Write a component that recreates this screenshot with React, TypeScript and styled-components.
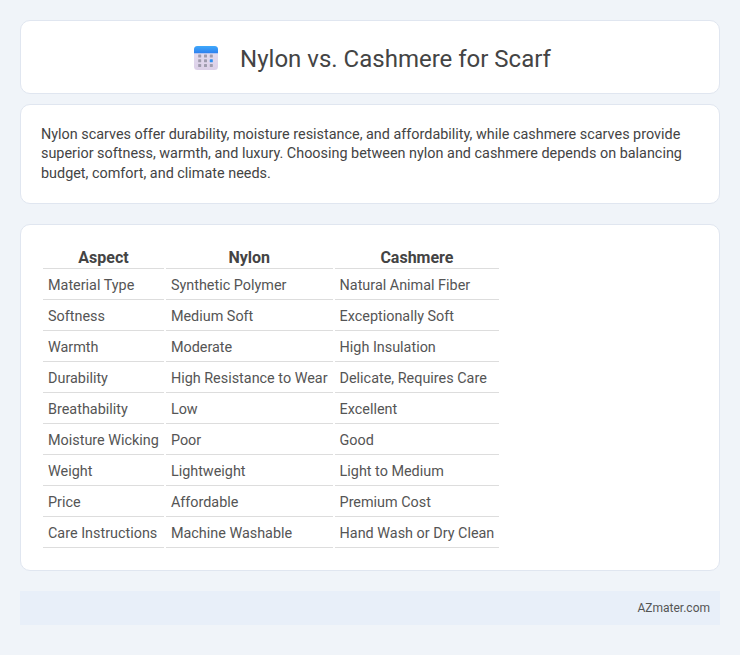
import { createGlobalStyle, styled } from "styled-components";

const GlobalStyle = createGlobalStyle`
  body {
    margin: 0;
    padding: 20px;
    background: #f0f4f9;
    font-family: Roboto, "Liberation Sans", sans-serif;
    font-size: 14.4px;
    line-height: 1.35;
    color: #444;
  }
`;

const Page = styled.div`
  display: flex;
  flex-direction: column;
`;

const Card = styled.section<{ $gap?: number }>`
  background: #fff;
  border: 1px solid #e0e6f0;
  border-radius: 10px;
  margin-bottom: ${(p) => p.$gap ?? 10}px;
`;

const Header = styled(Card)`
  display: flex;
  align-items: center;
  justify-content: center;
  gap: 22.5px;
  height: 74px;
  padding: 2px 0 0 4.5px;
  box-sizing: border-box;
`;

const Title = styled.h1`
  margin: 0;
  padding-top: 4px;
  font-size: 24px;
  font-weight: 400;
  line-height: 1.3;
  color: #444;
`;

const Summary = styled(Card)`
  padding: 20px;
`;

const SummaryText = styled.p`
  margin: 0;
`;

const TableCard = styled(Card)`
  padding: 20px;
`;

const Table = styled.table`
  border-collapse: separate;
  border-spacing: 2px;
`;

const Th = styled.th`
  padding: 0 5px;
  font-size: 16px;
  font-weight: 700;
  line-height: 21px;
  text-align: center;
  border-bottom: 1px solid #ddd;
`;

const Td = styled.td`
  padding: 6px 5px 4px;
  height: 18px;
  line-height: 18px;
  color: #555;
  border-bottom: 1px solid #ddd;
`;

const Footer = styled.footer`
  display: flex;
  justify-content: flex-end;
  align-items: center;
  height: 34px;
  padding: 0 10px;
  background: #e8eff9;
  font-size: 12px;
  color: #555;
`;

const rows = [
  ["Material Type", "Synthetic Polymer", "Natural Animal Fiber"],
  ["Softness", "Medium Soft", "Exceptionally Soft"],
  ["Warmth", "Moderate", "High Insulation"],
  ["Durability", "High Resistance to Wear", "Delicate, Requires Care"],
  ["Breathability", "Low", "Excellent"],
  ["Moisture Wicking", "Poor", "Good"],
  ["Weight", "Lightweight", "Light to Medium"],
  ["Price", "Affordable", "Premium Cost"],
  ["Care Instructions", "Machine Washable", "Hand Wash or Dry Clean"],
];

function CalendarIcon() {
  const dots = [0, 1, 2].flatMap((r) => [0, 1, 2].map((c) => ({ r, c })));
  return (
    <svg width="24" height="24" viewBox="0 0 24 24">
      <defs>
        <linearGradient id="cal-top" x1="0" y1="0" x2="0" y2="1">
          <stop offset="0" stopColor="#3fa9fb" />
          <stop offset="1" stopColor="#2f80ee" />
        </linearGradient>
        <linearGradient id="cal-body" x1="0" y1="0" x2="0" y2="1">
          <stop offset="0" stopColor="#e6e0f2" />
          <stop offset="1" stopColor="#dcd0e8" />
        </linearGradient>
      </defs>
      <rect width="24" height="24" rx="3.5" fill="url(#cal-body)" />
      <path d="M0 7.300V3.500A3.500 3.500 0 0 1 3.500 0h17A3.500 3.500 0 0 1 24 3.500V7.300Z" fill="url(#cal-top)" />
      {dots.map(({ r, c }) => (
        <rect
          key={`${r}-${c}`}
          x={4.2 + c * 5.8}
          y={8.6 + r * 4.7}
          width="3"
          height="3"
          rx="0.5"
          fill={r === 1 && c === 2 ? "#2f8ff0" : "#a09cae"}
        />
      ))}
    </svg>
  );
}

export default function App() {
  return (
    <Page>
      <GlobalStyle />
      <Header>
        <CalendarIcon />
        <Title>Nylon vs. Cashmere for Scarf</Title>
      </Header>
      <Summary $gap={20}>
        <SummaryText>
          Nylon scarves offer durability, moisture resistance, and affordability, while cashmere
          scarves provide superior softness, warmth, and luxury. Choosing between nylon and
          cashmere depends on balancing budget, comfort, and climate needs.
        </SummaryText>
      </Summary>
      <TableCard $gap={20}>
        <Table>
          <thead>
            <tr>
              <Th>Aspect</Th>
              <Th>Nylon</Th>
              <Th>Cashmere</Th>
            </tr>
          </thead>
          <tbody>
            {rows.map((row) => (
              <tr key={row[0]}>
                {row.map((cell) => (
                  <Td key={cell}>{cell}</Td>
                ))}
              </tr>
            ))}
          </tbody>
        </Table>
      </TableCard>
      <Footer>AZmater.com</Footer>
    </Page>
  );
}
